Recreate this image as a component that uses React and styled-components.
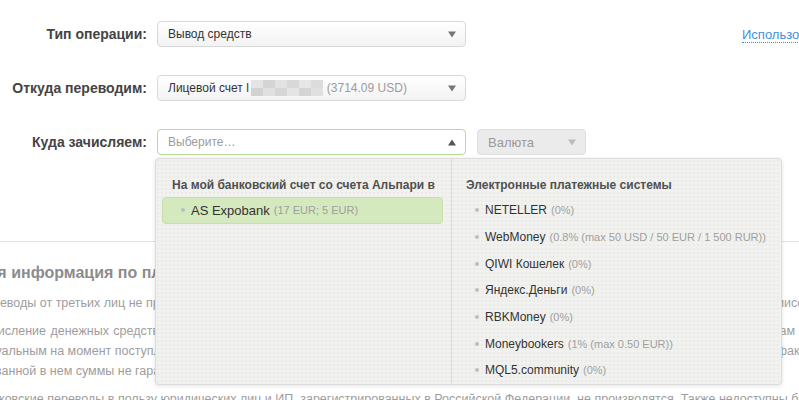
import styled, { createGlobalStyle, css } from 'styled-components'

const GlobalStyle = createGlobalStyle`
	body {
		margin: 0;
		background: #fff;
		overflow: hidden;
		font-family: "Liberation Sans", Arial, sans-serif;
	}
`

const Page = styled.div`
	width: 799px;
	height: 400px;
	overflow: hidden;
	position: relative;
`

const Form = styled.div`
	display: flex;
	flex-direction: column;
	gap: 28px;
	padding-top: 21px;
`

const Row = styled.div`
	display: flex;
	align-items: center;
	height: 26px;
	white-space: nowrap;
`

const Label = styled.div`
	width: 147px;
	text-align: right;
	font-size: 14px;
	font-weight: bold;
	color: #444;
	margin-right: 10px;
	flex-shrink: 0;
`

const SelectWrap = styled.div`
	position: relative;
	flex-shrink: 0;
`

const Select = styled.div`
	box-sizing: border-box;
	flex-shrink: 0;
	width: ${(props) => props.width || 309}px;
	height: 26px;
	display: flex;
	align-items: center;
	padding: 0 9px 0 10px;
	border: 1px solid #d8d8d8;
	border-radius: 4px;
	background: linear-gradient(#ffffff, #f3f3f3);
	font-size: 12px;
	color: #333;
	${(props) => props.focused && css`
		border-color: #b8dc8e;
		background: #fff;
	`}
	${(props) => props.disabled && css`
		background: #ebebeb;
		border-color: #dedede;
		color: #9a9a9a;
		font-size: 13px;
	`}
`

const SelectText = styled.span`
	flex: 1;
	overflow: hidden;
	display: flex;
	align-items: center;
`

const Muted = styled.span`
	color: #9c9c9c;
	margin-left: ${(props) => props.gap || 0}px;
`

const Blur = styled.span`
	display: inline-block;
	width: 72px;
	height: 16px;
	margin-left: 2px;
	background:
		linear-gradient(90deg, #e4e4e4 0 12px, #d4d4d4 12px 24px, #e2e2e2 24px 36px, #d8d8d8 36px 48px, #e6e6e6 48px 60px, #dcdcdc 60px 72px) top / 100% 8px no-repeat,
		linear-gradient(90deg, #d2d2d2 0 12px, #e0e0e0 12px 24px, #d6d6d6 24px 36px, #e4e4e4 36px 48px, #d4d4d4 48px 60px, #e0e0e0 60px 72px) bottom / 100% 8px no-repeat;
`

const Arrow = ({ up, color }) => (
	<svg width="8" height="7" viewBox="0 0 8 7" style={{ flexShrink: 0 }}>
		<path d={up ? 'M0 6.5 L4 0.5 L8 6.5 Z' : 'M0 0.5 L8 0.5 L4 6.5 Z'} fill={color} />
	</svg>
)

const TemplateLink = styled.a`
	margin-left: 276px;
	font-size: 13px;
	color: #3f8fdf;
	text-decoration: none;
	border-bottom: 1px dotted #3f8fdf;
	line-height: 15px;
	margin-top: 2px;
`

const Currency = styled.div`
	margin-left: 11px;
`

const Dropdown = styled.div`
	position: absolute;
	top: 29px;
	left: -2px;
	width: 627px;
	height: 227px;
	box-sizing: border-box;
	display: grid;
	grid-template-columns: 295px 1fr;
	border: 1px solid #dcdcdc;
	border-radius: 4px;
	background-color: #f1f2ef;
	background-image: radial-gradient(#e6e8e2 0.6px, transparent 0.9px);
	background-size: 4px 4px;
	box-shadow: 0 1px 4px rgba(0, 0, 0, 0.12);
	z-index: 5;
	white-space: nowrap;
`

const Column = styled.div`
	padding: 18px 8px 0 6px;
	${(props) => props.divided && css`
		border-left: 1px solid #dcdcdc;
		padding-left: 4px;
	`}
`

const GroupTitle = styled.div`
	padding-left: 10px;
	font-size: 12px;
	font-weight: bold;
	line-height: 16px;
	color: #505050;
	margin-bottom: 4px;
`

const Item = styled.div`
	box-sizing: border-box;
	height: 26.67px;
	display: flex;
	align-items: center;
	padding-left: 18px;
	font-size: 12px;
	color: #333;
	border: 1px solid transparent;
	border-radius: 4px;
	${(props) => props.active && css`
		background: #d5e9be;
		border-color: #c6e0a8;
		font-size: 13px;
	`}
	&::before {
		content: '';
		width: 4px;
		height: 4px;
		border-radius: 50%;
		background: #bdbdbd;
		margin-right: 6px;
	}
`

const Note = styled.span`
	font-size: 11px;
	color: #a0a0a0;
	margin-left: 4px;
`

const Info = styled.div`
	margin-top: 86px;
	white-space: nowrap;
`

const Divider = styled.div`
	height: 1px;
	background: #e2e2e2;
`

const InfoTitle = styled.h2`
	margin: 20px 0 9px -53px;
	font-size: 16px;
	line-height: 22px;
	font-weight: bold;
	color: #8c8c8c;
`

const InfoText = styled.p`
	margin: 0 0 8px -23px;
	font-size: 12.5px;
	line-height: 20px;
	color: #9d9d9d;
`

/* a line that the original wraps just before the window edge */
const FullLine = styled.span`
	display: block;
	width: 818px;
	text-align: justify;
	text-align-last: justify;
	white-space: normal;
`

const banks = [
	['AS Expobank', '(17 EUR; 5 EUR)'],
]

const systems = [
	['NETELLER', '(0%)'],
	['WebMoney', '(0.8% (max 50 USD / 50 EUR / 1 500 RUR))'],
	['QIWI Кошелек', '(0%)'],
	['Яндекс.Деньги', '(0%)'],
	['RBKMoney', '(0%)'],
	['Moneybookers', '(1% (max 0.50 EUR))'],
	['MQL5.community', '(0%)'],
]

export default function App() {
	return (
		<Page>
			<GlobalStyle />
			<Form>
				<Row>
					<Label>Тип операции:</Label>
					<Select>
						<SelectText>Вывод средств</SelectText>
						<Arrow color="#777" />
					</Select>
					<TemplateLink>Использовать шаблон</TemplateLink>
				</Row>
				<Row>
					<Label>Откуда переводим:</Label>
					<Select>
						<SelectText>
							Лицевой счет l<Blur />
							<Muted gap={4}>(3714.09 USD)</Muted>
						</SelectText>
						<Arrow color="#777" />
					</Select>
				</Row>
				<Row>
					<Label>Куда зачисляем:</Label>
					<SelectWrap>
						<Select focused>
							<SelectText><Muted>Выберите…</Muted></SelectText>
							<Arrow up color="#555" />
						</Select>
						<Dropdown>
							<Column>
								<GroupTitle>На мой банковский счет со счета Альпари в</GroupTitle>
								{banks.map(([name, note]) => (
									<Item key={name} active>
										{name}<Note>{note}</Note>
									</Item>
								))}
							</Column>
							<Column divided>
								<GroupTitle>Электронные платежные системы</GroupTitle>
								{systems.map(([name, note]) => (
									<Item key={name}>
										{name}<Note>{note}</Note>
									</Item>
								))}
							</Column>
						</Dropdown>
					</SelectWrap>
					<Currency>
						<Select disabled width={109}>
							<SelectText>Валюта</SelectText>
							<Arrow color="#bbb" />
						</Select>
					</Currency>
				</Row>
			</Form>
			<Info>
				<Divider />
				<InfoTitle>Важная информация по платежам</InfoTitle>
				<InfoText>
					Переводы от третьих лиц не принимаются. Денежные средства, поступившие от третьих лиц, возвращаются отправителю за вычетом комиссий банка клиента.
				</InfoText>
				<InfoText>
					<FullLine>
						Зачисление денежных средств на лицевой счет производится в валюте счета. Конвертация производится по текущим внутренним курсам
					</FullLine>
					актуальным на момент поступления средств на счет компании. Сумма зачисления может отличаться от суммы, указанной в заявке, и от фактического
					<br />
					указанной в нем суммы не гарантируется в случае удержания комиссий.
				</InfoText>
				<InfoText>
					Банковские переводы в пользу юридических лиц и ИП, зарегистрированных в Российской Федерации, не производятся. Также недоступны банковские
				</InfoText>
			</Info>
		</Page>
	)
}
